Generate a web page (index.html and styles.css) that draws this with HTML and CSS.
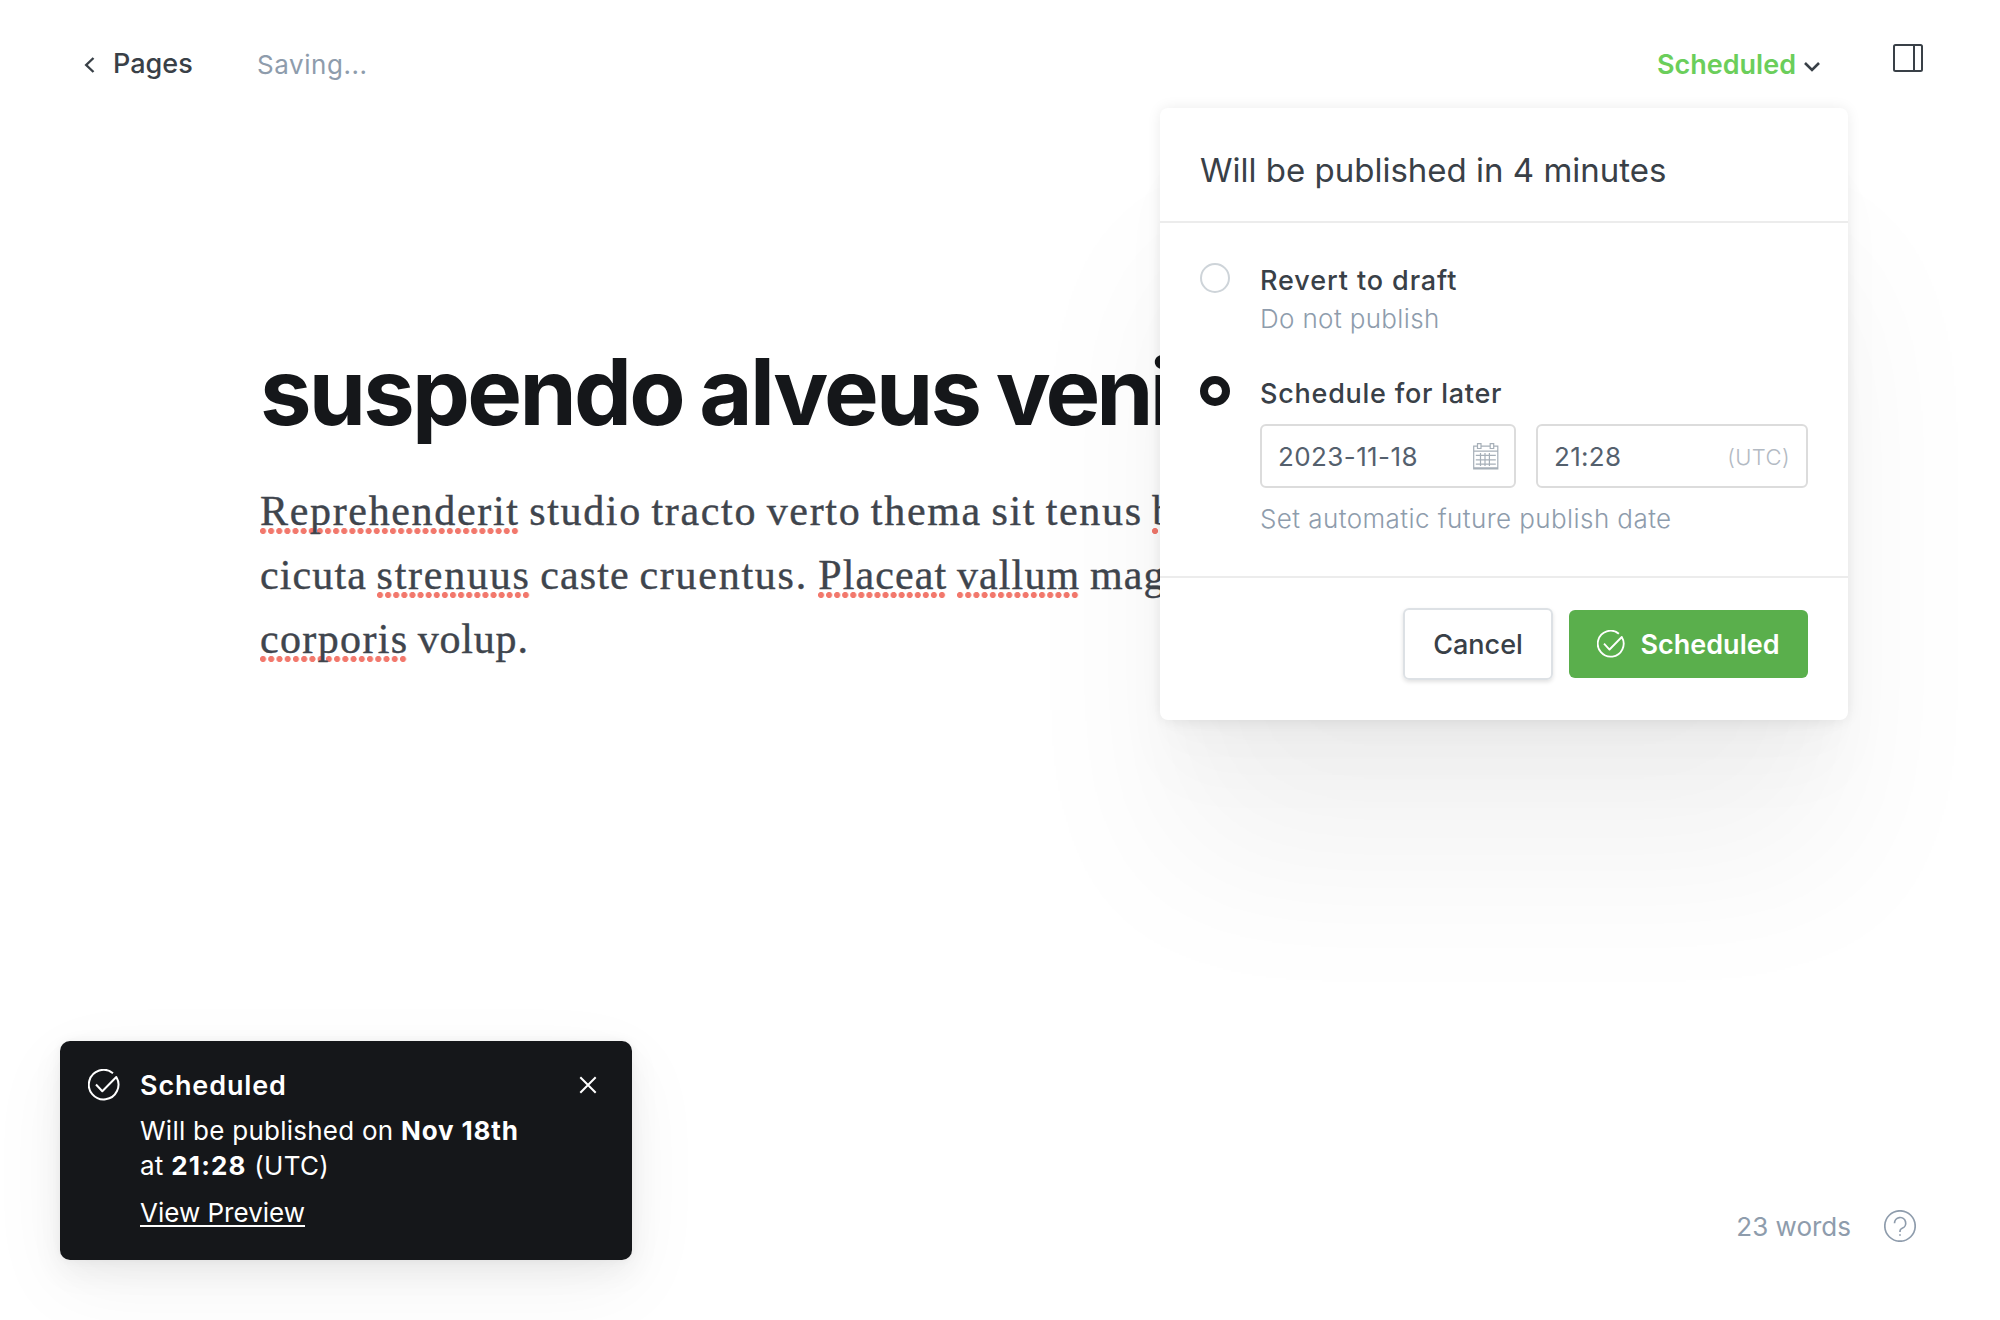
FILE: index.html
```html
<!DOCTYPE html>
<html lang="en">
<head>
<meta charset="utf-8">
<title>Page editor</title>
<link rel="stylesheet" href="styles.css">
</head>
<body>
<div class="app">
  <header class="topbar">
    <a class="back">
      <svg class="back-icon" width="12" height="18" viewBox="0 0 12 18"><path d="M9.5 2 2.2 9l7.3 7"/></svg>
      <span>Pages</span>
    </a>
    <span class="status">Saving...</span>
    <div class="topbar-actions">
      <button class="publish-trigger">
        <span>Scheduled</span>
        <svg class="caret" width="18" height="12" viewBox="0 0 18 12"><path d="m2 2 7 7 7-7"/></svg>
      </button>
      <svg class="sidebar-icon" width="30" height="28" viewBox="0 0 30 28"><rect x="1" y="1" width="28" height="26" rx="1.5"/><path d="M21 1v26"/></svg>
    </div>
  </header>

  <main class="editor">
    <h1 class="title">suspendo alveus <span class="tight">veni</span></h1>
    <div class="copy">
      <p class="line first"><span class="typo">Reprehenderit</span> studio tracto verto thema sit tenus <span class="typo">b</span></p>
      <p class="line">cicuta <span class="typo wide">strenuus</span> caste <span class="wide">cruentus. </span><span class="typo">Placeat</span> <span class="typo">vallum</span> mag</p>
      <p class="line last"><span class="typo medium">corporis</span> volup.</p>
    </div>
  </main>

  <footer class="footer">
    <span>23 words</span>
    <svg class="help-icon" width="32" height="32" viewBox="0 0 32 32"><circle cx="16" cy="16" r="15.2"/><path d="M10.5 13.2a5.6 5.6 0 1 1 7.7 5.1c-1.5.6-2.2 1.3-2.2 2.8v.8"/><path class="dot" d="M16 24.2v1.6"/></svg>
  </footer>

  <section class="publish-menu">
    <h2 class="menu-title">Will be published in 4 minutes</h2>
    <div class="options">
      <div class="option">
        <span class="radio"></span>
        <div class="option-body draft">
          <div class="option-label">Revert to draft</div>
          <div class="option-hint">Do not publish</div>
        </div>
      </div>
      <div class="option">
        <span class="radio checked"></span>
        <div class="option-body">
          <div class="option-label later">Schedule for later</div>
          <div class="fields">
            <div class="field date">
              <span>2023-11-18</span>
              <svg class="calendar" width="26" height="27" viewBox="0 0 26 27"><path d="M4.3 3.2H.7v22.6h24.1V3.2h-3.6M8 3.2h9M.7 8.2h24.1M4.5.7H8v4.8H4.5zM17.2.7h3.5v4.8h-3.5zM7.5 10v13M12 10v13M16.4 10v13M2.8 12.4h20M2.8 16.8h20M2.8 21.2h20M.7 24.8h24.1"/></svg>
            </div>
            <div class="field time">
              <span>21:28</span>
              <span class="zone">(UTC)</span>
            </div>
          </div>
          <div class="option-hint future">Set automatic future publish date</div>
        </div>
      </div>
    </div>
    <div class="menu-footer">
      <button class="btn btn-cancel">Cancel</button>
      <button class="btn btn-primary">
        <svg class="check" width="28" height="28" viewBox="0 0 32 32"><path d="M8 15.5l6.3 6.8L28.3 8A14.8 14.8 0 1 1 25 4.2"/></svg>
        <span>Scheduled</span>
      </button>
    </div>
  </section>

  <aside class="toast">
    <svg class="check toast-check" width="32" height="32" viewBox="0 0 32 32"><path d="M8 15.5l6.3 6.8L28.3 8A14.8 14.8 0 1 1 25 4.2"/></svg>
    <div class="toast-body">
      <div class="toast-title">Scheduled</div>
      <div class="toast-text">Will be published on <b>Nov 18th</b><br>at <b class="time-text">21:28</b> (UTC)</div>
      <a class="toast-link">View Preview</a>
    </div>
    <svg class="close" width="18" height="18" viewBox="0 0 18 18"><path d="m1.3 1.3 15.4 15.4M16.7 1.3 1.3 16.7"/></svg>
  </aside>
</div>
</body>
</html>
```
FILE: styles.css
```css
* { box-sizing: border-box; }

body {
  margin: 0;
  background: #fff;
  color: #394047;
  font-family: Inter, "Liberation Sans", sans-serif;
  font-size: 26px;
}

h1, h2, p { margin: 0; font-weight: inherit; }
button { border: 0; background: none; padding: 0; color: inherit; font: inherit; }
svg { fill: none; stroke: currentColor; stroke-width: 2; flex: none; display: block; }

.app {
  position: relative;
  display: flex;
  flex-direction: column;
  width: 2000px;
  height: 1320px;
  overflow: hidden;
}

/* Top bar */
.topbar {
  display: flex;
  align-items: center;
  height: 126px;
  padding: 0 77px 0 84px;
}
.back {
  display: flex;
  align-items: center;
  gap: 17px;
  width: 173px;
  font-size: 27px;
  font-weight: 500;
}
.back-icon { stroke-width: 2.4; margin-top: 3px; }
.status { margin-top: 3px; color: #8e9cac; letter-spacing: .55px; }
.topbar-actions { display: flex; align-items: center; gap: 72px; margin-left: auto; }
.publish-trigger {
  display: flex;
  align-items: center;
  gap: 7px;
  padding-top: 2px;
  color: #6bce5b;
  font-size: 27px;
  font-weight: 600;
}
.caret { margin-top: 6px; color: #394047; stroke-width: 2.6; }
.sidebar-icon { margin-bottom: 10px; }

/* Document */
.editor { flex: 1; padding: 216px 0 0 260px; white-space: nowrap; }
.title {
  color: #15171a;
  font-size: 92px;
  font-weight: 700;
  line-height: 100px;
  letter-spacing: -2.75px;
  word-spacing: -2.5px;
}
.tight { letter-spacing: -3.9px; }
.copy {
  margin-top: 37px;
  color: #3f454d;
  font: 42px/64px "Liberation Serif", serif;
  letter-spacing: 1.12px;
  word-spacing: -2px;
  -webkit-text-stroke: .4px;
}
.first { letter-spacing: 1.67px; word-spacing: -2.6px; }
.last { letter-spacing: .8px; }
.wide { letter-spacing: 1.75px; }
.medium { letter-spacing: 1.35px; }
.typo {
  background: radial-gradient(circle at 3px 4px, #f2786c 2.7px, transparent 3.4px) left bottom / 8px 7px space no-repeat;
}

/* Word count */
.footer {
  display: flex;
  justify-content: flex-end;
  align-items: center;
  gap: 33px;
  height: 188px;
  padding-right: 84px;
  color: #8e9cac;
}
.help-icon { stroke-width: 1.7; }

/* Publish menu */
.publish-menu {
  position: absolute;
  top: 108px;
  left: 1160px;
  width: 688px;
  height: 612px;
  border-radius: 8px;
  background: #fff;
  box-shadow:
    0 0 14px rgba(0, 0, 0, .08),
    0 19px 20px -10px rgba(0, 0, 0, .015),
    0 34px 36px -10px rgba(0, 0, 0, .015),
    0 64px 67px -10px rgba(0, 0, 0, .022),
    0 152px 160px -10px rgba(0, 0, 0, .05);
}
.menu-title {
  height: 115px;
  padding: 42px 40px 0;
  border-bottom: 2px solid #ececec;
  font-size: 33px;
  font-weight: 400;
  line-height: 40px;
}
.options {
  display: flex;
  flex-direction: column;
  gap: 36px;
  height: 355px;
  padding: 38px 40px 0;
  border-bottom: 2px solid #ececec;
}
.option { display: flex; gap: 30px; }
.radio {
  flex: none;
  width: 30px;
  height: 30px;
  margin-top: 2px;
  border: 2px solid #ced4d9;
  border-radius: 50%;
}
.radio.checked { border: 8px solid #15171a; }
.option-body { flex: 1; }
.option-body.draft { padding-top: 1px; }
.option-label {
  font-size: 27px;
  font-weight: 500;
  line-height: 38px;
  letter-spacing: .9px;
}
.option-label.later { padding-top: 1px; letter-spacing: .75px; }
.option-hint {
  color: #8e9cac;
  font-weight: 300;
  line-height: 38px;
  letter-spacing: .35px;
}
.option-hint.future { padding-top: 12px; letter-spacing: .42px; }
.fields { display: flex; gap: 20px; padding-top: 11px; }
.field {
  display: flex;
  align-items: center;
  justify-content: space-between;
  height: 64px;
  padding: 1px 16px 0;
  border: 2px solid #dcdcdc;
  border-radius: 6px;
  color: #54606d;
}
.date { width: 256px; padding-right: 15px; letter-spacing: .4px; }
.time { flex: 1; letter-spacing: .3px; }
.calendar { color: #a6afb8; stroke-width: 1.2; margin-top: -1px; }
.zone { color: #b3bac3; font-size: 22px; font-weight: 300; letter-spacing: .4px; }

.menu-footer { display: flex; justify-content: flex-end; gap: 16px; padding: 30px 40px 0; }
.btn {
  display: flex;
  align-items: center;
  justify-content: center;
  border-radius: 6px;
  font-size: 27px;
}
.btn-cancel {
  width: 150px;
  height: 72px;
  border: 2px solid #dde1e5;
  box-shadow: 0 2px 4px rgba(0, 0, 0, .12);
  font-weight: 500;
}
.btn-primary {
  gap: 15px;
  width: 239px;
  height: 68px;
  margin-top: 2px;
  background: #5aaf4c;
  color: #fff;
  font-weight: 600;
}
.check { stroke-width: 2.1; stroke-linejoin: round; }

/* Notification */
.toast {
  position: absolute;
  top: 1041px;
  left: 60px;
  display: flex;
  width: 572px;
  height: 219px;
  padding: 25px 35px 0 28px;
  border-radius: 10px;
  background: #15171a;
  color: #fff;
  box-shadow: 0 0 10px rgba(0, 0, 0, .05), 0 12px 32px rgba(0, 0, 0, .06), 0 24px 80px rgba(0, 0, 0, .05);
}
.toast-check { margin-top: 3px; stroke-width: 2; }
.toast-body { flex: 1; padding-left: 20px; }
.toast-title { font-size: 27px; font-weight: 600; line-height: 39px; letter-spacing: .85px; }
.toast-text { margin-top: 8px; line-height: 35px; letter-spacing: .25px; }
.toast-text b { font-weight: 700; letter-spacing: .85px; }
.toast-text .time-text { letter-spacing: 1.2px; }
.toast-link {
  display: inline-block;
  margin-top: 11px;
  line-height: 37px;
  text-decoration: underline;
  text-decoration-thickness: 2px;
  text-underline-offset: 3px;
  text-decoration-skip-ink: none;
}
.close { margin-top: 10px; }
```
